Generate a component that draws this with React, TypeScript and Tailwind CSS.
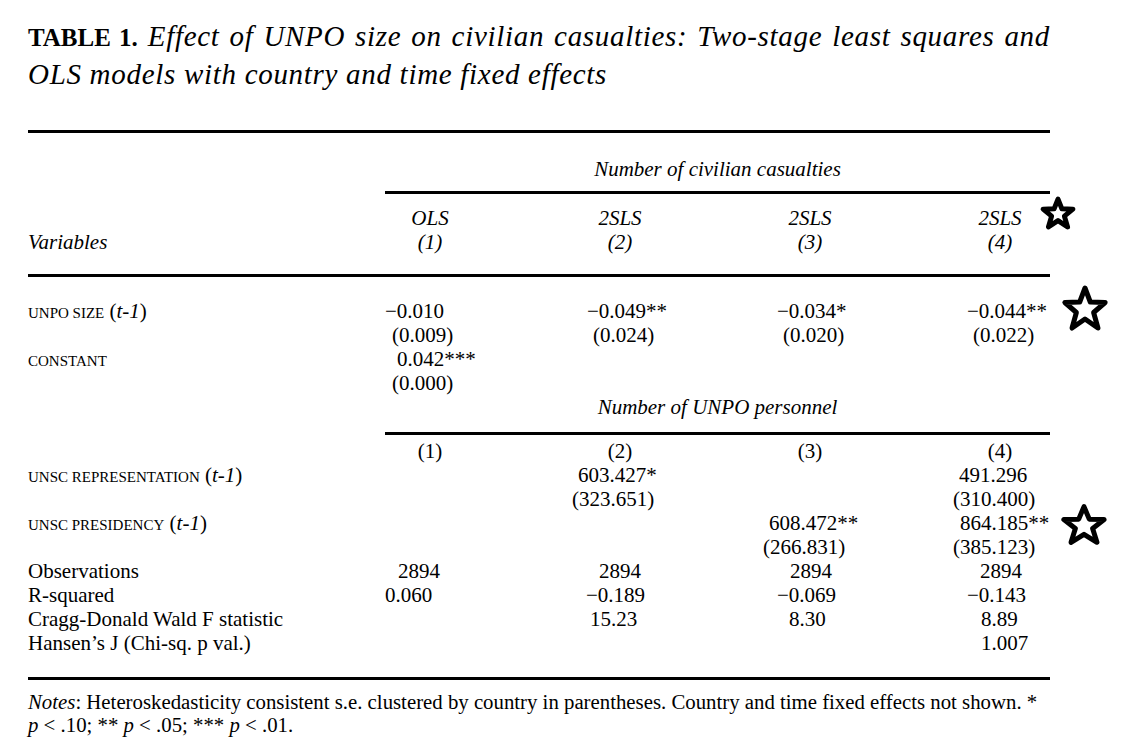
import type { ReactNode } from "react";

type Cell = { t: string; cls: string } | null;

type Row = {
  label: ReactNode;
  cells: Cell[];
};

const lag = (
  <span className="text-[21px]">
    (<i>t</i>-<i>1</i>)
  </span>
);

const smallCap = (text: string) => (
  <>
    <span className="text-[15px] uppercase">{text}</span> {lag}
  </>
);

const topRows: Row[] = [
  {
    label: smallCap("unpo size"),
    cells: [
      { t: "−0.010", cls: "pl-[5px]" },
      { t: "−0.049**", cls: "pl-[17px]" },
      { t: "−0.034*", cls: "pl-[17px]" },
      { t: "−0.044**", cls: "pl-[17px]" },
    ],
  },
  {
    label: "",
    cells: [
      { t: "(0.009)", cls: "pl-[12px]" },
      { t: "(0.024)", cls: "pl-[23px]" },
      { t: "(0.020)", cls: "pl-[23px]" },
      { t: "(0.022)", cls: "pl-[23px]" },
    ],
  },
  {
    label: <span className="text-[15px] uppercase">constant</span>,
    cells: [{ t: "0.042***", cls: "pl-[17px]" }, null, null, null],
  },
  {
    label: "",
    cells: [{ t: "(0.000)", cls: "pl-[12px]" }, null, null, null],
  },
];

const bottomRows: Row[] = [
  {
    label: smallCap("unsc representation"),
    cells: [
      null,
      { t: "603.427*", cls: "pl-[8px]" },
      null,
      { t: "491.296", cls: "pl-[9px]" },
    ],
  },
  {
    label: "",
    cells: [
      null,
      { t: "(323.651)", cls: "pl-[2px]" },
      null,
      { t: "(310.400)", cls: "pl-[3px]" },
    ],
  },
  {
    label: smallCap("unsc presidency"),
    cells: [
      null,
      null,
      { t: "608.472**", cls: "pl-[9px]" },
      { t: "864.185**", cls: "pl-[10px]" },
    ],
  },
  {
    label: "",
    cells: [
      null,
      null,
      { t: "(266.831)", cls: "pl-[3px]" },
      { t: "(385.123)", cls: "pl-[3px]" },
    ],
  },
  {
    label: "Observations",
    cells: [
      { t: "2894", cls: "pl-[18px]" },
      { t: "2894", cls: "pl-[29px]" },
      { t: "2894", cls: "pl-[30px]" },
      { t: "2894", cls: "pl-[30px]" },
    ],
  },
  {
    label: "R-squared",
    cells: [
      { t: "0.060", cls: "pl-[5px]" },
      { t: "−0.189", cls: "pl-[16px]" },
      { t: "−0.069", cls: "pl-[17px]" },
      { t: "−0.143", cls: "pl-[17px]" },
    ],
  },
  {
    label: "Cragg-Donald Wald F statistic",
    cells: [
      null,
      { t: "15.23", cls: "pl-[20px]" },
      { t: "8.30", cls: "pl-[29px]" },
      { t: "8.89", cls: "pl-[31px]" },
    ],
  },
  {
    label: "Hansen’s J (Chi-sq. p val.)",
    cells: [null, null, null, { t: "1.007", cls: "pl-[31px]" }],
  },
];

const gridCols = "grid grid-cols-[352px_190px_190px_190px_100px] h-[24px] leading-[24px]";

const DataRow = ({ row }: { row: Row }) => {
  return (
    <div className={gridCols}>
      <div className="whitespace-nowrap">{row.label}</div>
      {row.cells.map((cell, index) => (
        <div key={index} className={`whitespace-nowrap ${cell ? cell.cls : ""}`}>
          {cell ? cell.t : ""}
        </div>
      ))}
    </div>
  );
};

const HeaderRow = ({ label, items, italic }: { label?: ReactNode; items: string[]; italic?: boolean }) => {
  return (
    <div className={gridCols}>
      <div className="italic">{label}</div>
      {items.map((item, index) => (
        <div key={index} className={`w-[100px] text-center ${italic ? "italic" : ""}`}>
          {item}
        </div>
      ))}
    </div>
  );
};

const Star = ({ className }: { className: string }) => {
  return (
    <svg
      className={`absolute overflow-visible ${className}`}
      viewBox="0 0 48 46"
      preserveAspectRatio="none"
      fill="white"
      stroke="black"
      strokeWidth="5"
      strokeLinejoin="round"
    >
      <polygon
        points="24,3 29.5,17 45,17.5 33,27.5 37.5,43 24,34 10.5,43 15,27.5 3,17.5 18.5,17"
        vectorEffect="non-scaling-stroke"
      />
    </svg>
  );
};

const App = () => {
  return (
    <div className="relative w-[1141px] h-[755px] bg-white text-black font-['Liberation_Serif','Times_New_Roman',serif] text-[21px] overflow-hidden">
      <div className="pl-[28px] pt-[18px]">
        <div className="w-[1022px] text-[29px] leading-[36px] tracking-[0.7px]">
          <div className="text-justify [text-align-last:justify] whitespace-nowrap">
            <span className="font-bold text-[25px] tracking-normal">TABLE 1.</span>{" "}
            <i>Effect of UNPO size on civilian casualties: Two-stage least squares and</i>
          </div>
          <div className="italic">OLS models with country and time fixed effects</div>
        </div>

        <div className="mt-[38px] h-[3px] w-[1022px] bg-black" />

        <div className="mt-[24px] ml-[357px] w-[665px] text-center italic h-[24px] leading-[24px]">
          Number of civilian casualties
        </div>
        <div className="mt-[10px] ml-[357px] h-[3px] w-[665px] bg-black" />

        <div className="mt-[12px]">
          <HeaderRow items={["OLS", "2SLS", "2SLS", "2SLS"]} italic />
          <HeaderRow label="Variables" items={["(1)", "(2)", "(3)", "(4)"]} italic />
        </div>

        <div className="mt-[20px] h-[3px] w-[1022px] bg-black" />

        <div className="mt-[22px]">
          {topRows.map((row, index) => (
            <DataRow row={row} key={index} />
          ))}
          <div className="ml-[357px] w-[665px] text-center italic h-[24px] leading-[24px]">
            Number of UNPO personnel
          </div>
        </div>

        <div className="mt-[13px] ml-[357px] h-[3px] w-[665px] bg-black" />

        <div className="mt-[4px]">
          <HeaderRow items={["(1)", "(2)", "(3)", "(4)"]} />
          {bottomRows.map((row, index) => (
            <DataRow row={row} key={index} />
          ))}
        </div>

        <div className="mt-[22px] h-[3px] w-[1022px] bg-black" />

        <div className="mt-[10px] text-[20.8px] leading-[23px] whitespace-nowrap">
          <div>
            <i>Notes</i>: Heteroskedasticity consistent s.e. clustered by country in parentheses. Country and time
            fixed effects not shown. *
          </div>
          <div>
            <i>p</i> &lt; .10; ** <i>p</i> &lt; .05; *** <i>p</i> &lt; .01.
          </div>
        </div>
      </div>

      <Star className="left-[1041px] top-[197px] w-[34px] h-[32px]" />
      <Star className="left-[1062px] top-[285px] w-[46px] h-[46px]" />
      <Star className="left-[1061px] top-[504px] w-[46px] h-[41px]" />
    </div>
  );
};

export default App;
